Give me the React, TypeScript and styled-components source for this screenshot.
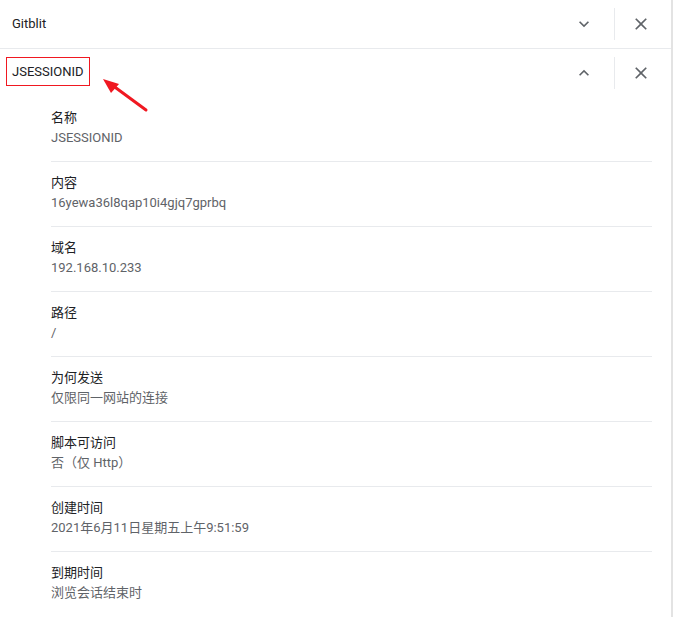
import React from "react";
import styled, { createGlobalStyle } from "styled-components";

const Global = createGlobalStyle`
  html, body { margin: 0; padding: 0; background: #fff; }
  body { font-family: Roboto, "Noto Sans CJK SC", sans-serif; font-size: 13px; color: #202124; }
`;

const Page = styled.div`
  position: relative;
  width: 671px;
  height: 617px;
  border-right: 2px solid #e3e3e3;
  background: #fff;
`;

const HeaderRow = styled.div<{ $bordered?: boolean }>`
  display: flex;
  align-items: center;
  height: 48px;
  padding: 0 12px;
  border-bottom: ${(p) => (p.$bordered ? "1px solid #e8eaed" : "none")};
`;

const Title = styled.div`
  flex: 1;
  display: flex;
  align-items: center;
  line-height: 20px;
  color: #202124;
`;

const Marked = styled.span`
  display: inline-block;
  margin: 0 0 3px -6px;
  padding: 3px 5px;
  line-height: 21px;
  border: 1px solid #f01821;
`;

const IconButton = styled.div`
  width: 36px;
  height: 36px;
  display: flex;
  align-items: center;
  justify-content: center;
  color: #5f6368;
`;

const Divider = styled.div`
  width: 1px;
  height: 32px;
  background: #e8eaed;
  margin: 0 8px 0 12px;
`;

const Fields = styled.div`
  padding: 0 19px 0 51px;
`;

const Field = styled.div`
  padding: 11px 0 13px;
  border-bottom: 1px solid #e8eaed;
  &:last-child { border-bottom: none; }
`;

const Label = styled.div`
  line-height: 20px;
  color: #202124;
`;

const Value = styled.div`
  line-height: 20px;
  color: #5f6368;
`;

const Arrow = styled.svg`
  position: absolute;
  left: 100px;
  top: 75px;
`;

const ChevronDown = () => (
  <svg width="20" height="20" viewBox="0 0 24 24" fill="currentColor">
    <path d="M16.59 8.59L12 13.17 7.41 8.59 6 10l6 6 6-6z" />
  </svg>
);
const ChevronUp = () => (
  <svg width="20" height="20" viewBox="0 0 24 24" fill="currentColor">
    <path d="M12 8l-6 6 1.41 1.41L12 10.83l4.59 4.58L18 14z" />
  </svg>
);
const Close = () => (
  <svg width="20" height="20" viewBox="0 0 24 24" fill="currentColor">
    <path d="M19 6.41L17.59 5 12 10.59 6.41 5 5 6.41 10.59 12 5 17.59 6.41 19 12 13.41 17.59 19 19 17.59 13.41 12z" />
  </svg>
);

const fields: [string, string][] = [
  ["名称", "JSESSIONID"],
  ["内容", "16yewa36l8qap10i4gjq7gprbq"],
  ["域名", "192.168.10.233"],
  ["路径", "/"],
  ["为何发送", "仅限同一网站的连接"],
  ["脚本可访问", "否（仅 Http）"],
  ["创建时间", "2021年6月11日星期五上午9:51:59"],
  ["到期时间", "浏览会话结束时"],
];

export default function App() {
  return (
    <>
      <Global />
      <Page>
        <HeaderRow $bordered>
          <Title>Gitblit</Title>
          <IconButton><ChevronDown /></IconButton>
          <Divider />
          <IconButton><Close /></IconButton>
        </HeaderRow>
        <HeaderRow>
          <Title><Marked>JSESSIONID</Marked></Title>
          <IconButton><ChevronUp /></IconButton>
          <Divider />
          <IconButton><Close /></IconButton>
        </HeaderRow>
        <Fields>
          {fields.map(([l, v]) => (
            <Field key={l}>
              <Label>{l}</Label>
              <Value>{v}</Value>
            </Field>
          ))}
        </Fields>
        <Arrow width="50" height="40" viewBox="0 0 50 40">
          <line x1="46" y1="35" x2="12" y2="10" stroke="#f01821" strokeWidth="3" strokeLinecap="round" />
          <polygon points="3,4 19,9 11,18" fill="#f01821" />
        </Arrow>
      </Page>
    </>
  );
}
